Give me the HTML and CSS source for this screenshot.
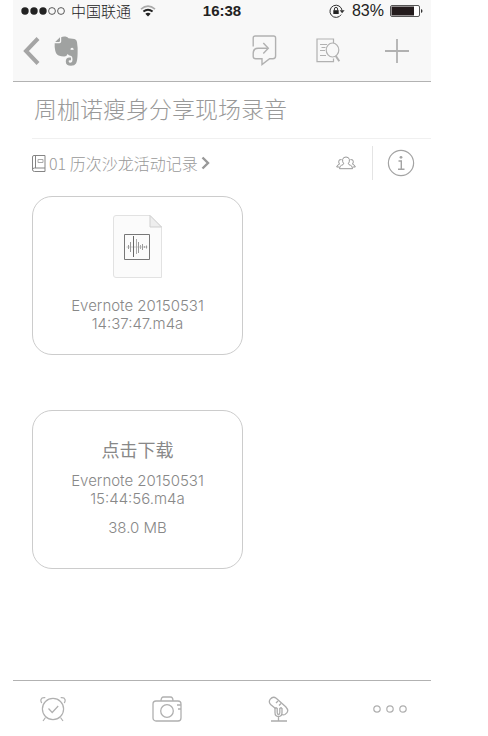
FILE: index.html
```html
<!DOCTYPE html>
<html lang="zh-CN">
<head>
<meta charset="utf-8">
<meta name="viewport" content="width=device-width, initial-scale=1">
<title>周枷诺瘦身分享现场录音</title>
<link rel="stylesheet" href="styles.css">
</head>
<body>
<div class="phone">
  <header class="header">
    <div class="status">
      <div class="carrier">
        <svg width="44" height="10" viewBox="0 0 44 10" aria-hidden="true">
          <g fill="#222"><circle cx="4" cy="5" r="3.7"/><circle cx="13" cy="5" r="3.7"/><circle cx="22" cy="5" r="3.7"/></g>
          <g fill="none" stroke="#333" stroke-width=".8"><circle cx="31" cy="5" r="3.4"/><circle cx="40" cy="5" r="3.4"/></g>
        </svg>
        <span>中国联通</span>
        <svg class="wifi" width="16" height="12" viewBox="0 0 16 12" fill="none" aria-hidden="true">
          <path d="M1 4.2Q8-1.8 15 4.2" stroke="#aaa" stroke-width="1.6"/>
          <path d="M3.4 6.6Q8 2.8 12.6 6.6" stroke="#222" stroke-width="1.9"/>
          <path d="M5.3 8.8Q8 6.6 10.7 8.8L8 11.5Z" fill="#222"/>
        </svg>
      </div>
      <time class="time">16:38</time>
      <div class="power">
        <svg width="17" height="14" viewBox="0 0 17 14" fill="none" stroke="#333" aria-hidden="true">
          <path d="M12.2 10.6A6.1 6.1 0 1 1 13.1 6.5"/>
          <path d="M10.6 6.2h5l-2.5 3z" fill="#333" stroke="none"/>
          <path d="M5.4 6.5V5a1.6 1.6 0 0 1 3.2 0v1.5"/>
          <path d="M4.3 6.2h5.4V10H4.3z" fill="#222" stroke="none"/>
        </svg>
        <span>83%</span>
        <svg width="33" height="12" viewBox="0 0 33 12" aria-hidden="true">
          <rect x=".5" y=".5" width="29" height="11" rx="1.5" fill="#fff" stroke="#555"/>
          <path d="M1.500 1.500H24v9H1.500z" fill="#231b1c"/>
          <path d="M31 4q1.500.4 1.500 2T31 8z" fill="#333"/>
        </svg>
      </div>
    </div>
    <nav class="nav">
      <button class="icon-button" type="button" aria-label="返回">
        <svg width="17" height="28" viewBox="0 0 17 28" fill="none" stroke="#a5a5a5" stroke-width="4"><path d="M15 1.500 3 14l12 12.500"/></svg>
      </button>
      <button class="icon-button home" type="button" aria-label="主页">
        <svg width="24" height="30" viewBox="0 0 24 30" fill="#a0a2a1">
          <path d="M6 1.200v3.600Q6 6 4.800 6H1.200z"/>
          <path fill-rule="evenodd" d="M7.200 1.200Q9 .2 11.500.600 14 1 14.500 2.300L20.500 3Q22.600 3.300 23 6 23.900 11 23.600 18 23.400 25 22 27.500 20.700 29.800 17 29.800 11.800 29.800 11.800 25.500 11.800 21.400 15.500 21.400H17v2.800h-1.200q-1.200 0-1.200 1.100 0 1.500 1.900 1.500 2 0 2-2.700 0-3.700-1.300-4.100-2.800-.3-3.600-2-.9 2.500-3.400 2.500-3.200 0-5.600-1Q2 18.700 1.200 14.600.4 11 .7 7.200h4.700q1.800 0 1.800-1.800zM16.600 12.800q0 .9.200 1.100 1.400-.4 2.800.2.100-2.400-1.400-2.400-1.400 0-1.600 1.100z"/>
        </svg>
      </button>
      <button class="icon-button share" type="button" aria-label="分享">
        <svg width="25" height="31" viewBox="0 0 25 31" fill="none" stroke="#b1b1b1" stroke-width="1.400">
          <path d="M1.200 11.500V3q0-2 2-2h18.400q2 0 2 2v18q0 2.700-2.700 2.700h-3.300L10 29.500v-5.800H3.700q-2.500 0-2.500-2.200v-3.200q0-5 5-5h9.400"/>
          <path d="m11.300 8 5 5.300-5 5.300"/>
        </svg>
      </button>
      <button class="icon-button find" type="button" aria-label="在笔记中查找">
        <svg width="25" height="25" viewBox="0 0 25 25" fill="none" stroke="#b1b1b1" stroke-width="1.200">
          <path d="M17.500 5V1H1v22.600h16.500v-3M4 6.500h7M5.500 9.500h4M4 12.500h5M4 17.500h6"/>
          <ellipse cx="16.500" cy="12" rx="6.300" ry="7"/>
          <path d="m19.800 18 3.500 5.200" stroke-width="2"/>
        </svg>
      </button>
      <button class="icon-button" type="button" aria-label="新建">
        <svg width="24" height="24" viewBox="0 0 24 24" fill="none" stroke="#b1b1b1" stroke-width="1.800"><path d="M12 0v24M0 12h24"/></svg>
      </button>
    </nav>
  </header>

  <main class="note">
    <h1 class="title">周枷诺瘦身分享现场录音</h1>
    <div class="meta">
      <a class="notebook" href="#notebook">
        <svg width="14" height="17" viewBox="0 0 14 17" fill="none" stroke="#858585" aria-hidden="true">
          <path d="M13 13V.500H2Q.500.500.500 2v12.500q0 2 2 2H13V13H2.500Q.500 13 .500 14.800M3.500.500V13"/><path d="M6 4.500h5v3H6z" stroke="#aaa"/>
        </svg>
        <span>01 历次沙龙活动记录</span>
        <svg width="9" height="14" viewBox="0 0 9 14" fill="none" stroke="#999" stroke-width="2.400" aria-hidden="true"><path d="m1.500 1.500 5.500 5.500-5.500 5.500"/></svg>
      </a>
      <button class="icon-button people" type="button" aria-label="共享成员">
        <svg width="20" height="14" viewBox="0 0 20 14" fill="none" stroke="#8c8c8c" stroke-width=".9">
          <path d="M7.700 7.800Q6.300 5.800 6.600 3.600 7 1 10 1t3.400 2.600q.3 2.200-1.100 4.200.3 1 2.200 1.500 2 .7 2 3.400H3.500q0-2.700 2-3.400 1.900-.5 2.200-1.500z"/>
          <path d="M5.600 3.600Q2.500 3 2.700 5.800q.1 1.500.9 2.300Q1 8.900.7 11h2.500M14.400 3.600q3.100-.6 2.900 2.200-.1 1.500-.9 2.300 2.600.8 2.900 2.900h-2.500"/>
        </svg>
      </button>
      <button class="icon-button info" type="button" aria-label="笔记信息">
        <svg width="28" height="28" viewBox="0 0 28 28" fill="none" stroke="#a3a3a3">
          <circle cx="14" cy="14" r="12.600" stroke-width="1.200"/>
          <circle cx="14" cy="8.300" r="1.400" fill="#a3a3a3" stroke="none"/>
          <path d="M11.500 12h2.800v8M11 20.200h6.500" stroke-width="1.400"/>
        </svg>
      </button>
    </div>

    <div class="attachments">
      <button class="card" type="button">
        <svg class="file" width="49" height="63" viewBox="0 0 49 63" fill="none" aria-hidden="true">
          <path d="M3 .500h34L48.500 12v50.500H3Q.500 62.500.500 60V3Q.500.500 3 .500z" fill="#fbfbfb" stroke="#e2e2e2"/>
          <path d="M37 .500V12h11.500z" fill="#eee" stroke="#cfcfcf"/>
          <path d="M11.500 19.500h25v25h-25z" stroke="#777"/>
          <path d="M13.500 32h21" stroke="#ccc"/>
          <path d="M15.500 30v4M17.500 27v10M25.500 27v11M29.500 29v6M33.500 30.500v3" stroke="#999"/>
          <path d="M20.500 21v21" stroke="#666"/><path d="M23.500 24v15M27.500 30v4M31.500 31v2" stroke="#aaa"/>
        </svg>
        <span class="filename">Evernote 20150531<br>14:37:47.m4a</span>
      </button>
      <button class="card" type="button">
        <span class="download">点击下载</span>
        <span class="filename">Evernote 20150531<br>15:44:56.m4a</span>
        <span class="size">38.0 MB</span>
      </button>
    </div>
  </main>

  <footer class="toolbar">
    <button class="icon-button" type="button" aria-label="提醒">
      <svg width="28" height="26" viewBox="0 0 28 26" fill="none" stroke="#b0b0b0" stroke-width="1.200">
        <circle cx="13" cy="13" r="10.600"/><path d="m8.500 12.500 3.700 4 6-6.500M5.500 21.500 3 25M20.500 21.500 23 25M1.800 7Q.500 5.500 1 3.500 1.800 1.200 5.300 1.700M24.200 7q1.300-1.500.8-3.500-.8-2.300-4.300-1.800"/>
      </svg>
    </button>
    <button class="icon-button" type="button" aria-label="拍照">
      <svg width="30" height="26" viewBox="0 0 30 26" fill="none" stroke="#b0b0b0" stroke-width="1.300">
        <rect x="1" y="5" width="28" height="20" rx="3"/><path d="M9 5Q9 1 11.500 1h7Q21 1 21 5M25 9h4M26 13h3"/><circle cx="15" cy="15" r="6.300"/>
      </svg>
    </button>
    <button class="icon-button" type="button" aria-label="录音">
      <svg width="22" height="26" viewBox="-1 0 22 26" fill="none" stroke="#acacac" stroke-width="1.300">
        <path d="M7.500 12.500 2.600 8.500Q.200 6 2.300 3.200 5-.1 8.200 2.300l9.500 8.400q4.500 4.800-.8 7.800-1.800.8-3.300-.3"/>
        <path d="M7 12v4.500q0 4 3.500 4t3.500-4V12M9.200 12v4.500q0 2 1.300 2t1.300-2V12M7 12h2.200M11.800 12H14M10.500 20.500V25M3 25h16M8 7l2-2M11 9.500l2-2"/>
      </svg>
    </button>
    <button class="icon-button" type="button" aria-label="更多">
      <svg width="34" height="10" viewBox="0 0 34 10" fill="none" stroke="#b0b0b0" stroke-width="1.200"><circle cx="4" cy="5" r="3.200"/><circle cx="17" cy="5" r="3.200"/><circle cx="30" cy="5" r="3.200"/></svg>
    </button>
  </footer>
</div>
</body>
</html>
```
FILE: styles.css
```css
* {
  box-sizing: border-box;
}

body {
  margin: 0;
  background: #fff;
  font-family: "Liberation Sans", "Noto Sans CJK SC", sans-serif;
  font-size: 16px;
  color: #999;
}

svg {
  display: block;
  flex: none;
}

.phone {
  display: flex;
  flex-direction: column;
  min-height: 100vh;
  margin: 0 57px 0 13px;
}

.icon-button {
  padding: 0;
  border: 0;
  background: none;
  cursor: pointer;
}

.header {
  background: #f8f8f8;
  border-bottom: 1px solid #b2b2b2;
}

.status {
  display: grid;
  grid-template-columns: 1fr auto 1fr;
  align-items: center;
  height: 20px;
  padding: 0 8px;
  color: #222;
}

.carrier,
.power {
  display: flex;
  align-items: center;
  gap: 6px;
  font-size: 15px;
  font-weight: 300;
}

.carrier {
  font-family: "Noto Sans CJK SC", sans-serif;
}

.wifi {
  margin-left: 3px;
}

.power {
  justify-content: flex-end;
  font-size: 16px;
}

.time {
  font-size: 15px;
  font-weight: 700;
}

.nav {
  display: flex;
  align-items: center;
  height: 61px;
  padding: 0 22px 0 10px;
}

.home {
  margin-left: 14px;
}

.share {
  margin-left: auto;
}

.find {
  margin: 0 44px 0 39px;
}

.note {
  flex: 1;
  padding-left: 19px;
}

.title {
  margin: 0;
  padding: 0 2px 4px;
  border-bottom: 1px solid #f0f0f0;
  font-family: "Noto Sans CJK SC", sans-serif;
  font-size: 23px;
  font-weight: 300;
  line-height: 52px;
  color: #999;
}

.meta {
  display: flex;
  align-items: center;
  height: 48px;
  padding-right: 16px;
}

.notebook {
  display: flex;
  align-items: center;
  gap: 3px;
  margin-right: auto;
  font-family: "Noto Sans CJK SC", sans-serif;
  font-weight: 300;
  color: #999;
  text-decoration: none;
}

.people {
  margin-right: 16px;
}

.info {
  padding: 3px 0 3px 14px;
  border-left: 1px solid #e4e4e4;
}

.attachments {
  display: flex;
  flex-direction: column;
  align-items: flex-start;
  gap: 55px;
  padding: 9px 0 24px;
}

.card {
  display: flex;
  flex-direction: column;
  align-items: center;
  justify-content: center;
  width: 211px;
  min-height: 159px;
  padding: 18px 18px 21px;
  border: 1px solid #ccc;
  border-radius: 20px;
  background: #fff;
  font-family: Inter, "Liberation Sans", sans-serif;
  font-size: 15px;
  font-weight: 300;
  line-height: 18px;
  color: #888;
  cursor: pointer;
}

.file {
  margin-bottom: 19px;
}

.download {
  margin-bottom: 14px;
  font-family: "Noto Sans CJK SC", sans-serif;
  font-size: 18px;
  font-weight: 400;
}

.size {
  margin-top: 11px;
}

.toolbar {
  display: flex;
  align-items: center;
  justify-content: space-between;
  height: 56px;
  padding: 0 24px 0 27px;
  border-top: 1px solid #b2b2b2;
}
```
